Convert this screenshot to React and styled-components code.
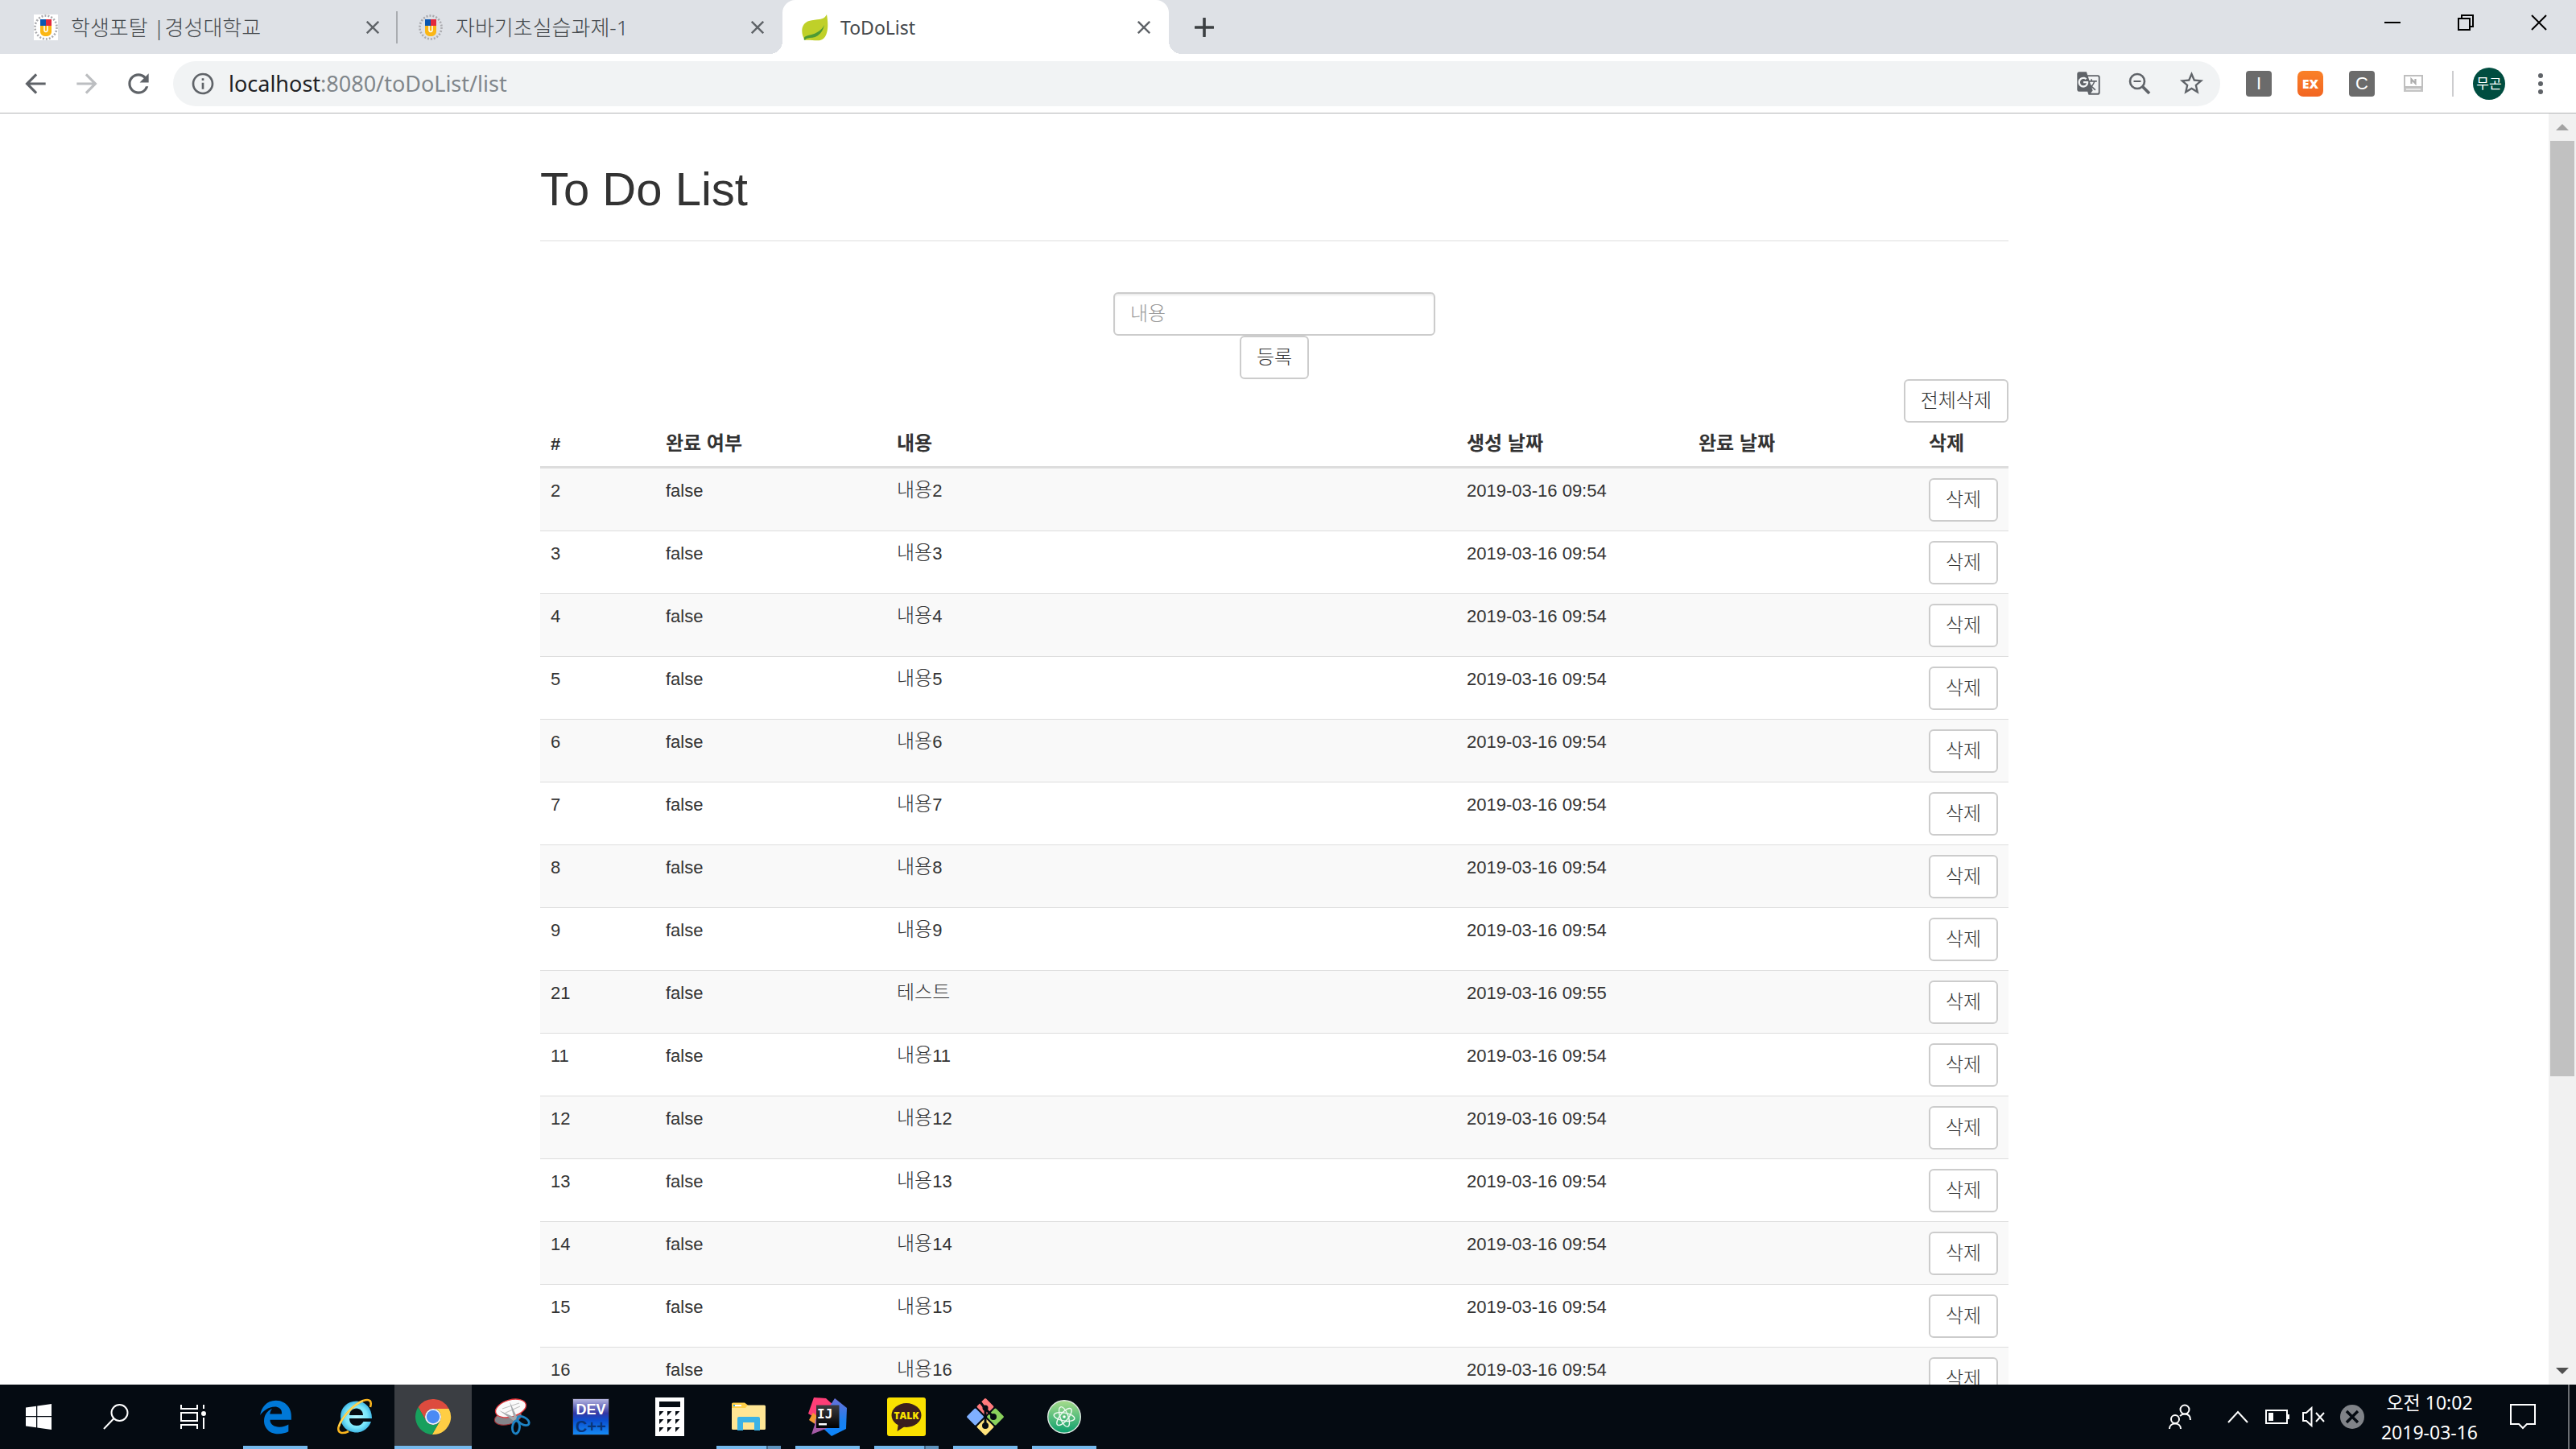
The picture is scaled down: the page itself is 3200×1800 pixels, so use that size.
import React from "react";
import styled, { createGlobalStyle, css } from "styled-components";
import { FaEdgeLegacy } from "react-icons/fa";
import {
  MdArrowBack,
  MdArrowForward,
  MdRefresh,
  MdInfoOutline,
  MdGTranslate,
  MdStarBorder,
} from "react-icons/md";

const uiFont = `"Noto Sans", "Noto Sans CJK KR", sans-serif`;
const pageFont = `"Liberation Sans", "Noto Sans CJK KR", sans-serif`;

const GlobalStyle = createGlobalStyle`
  *, *::before, *::after { box-sizing: border-box; }
  html, body { margin: 0; overflow: hidden; }
  body { font-family: ${uiFont}; background: #fff; }
  button { font: inherit; color: inherit; margin: 0; padding: 0; border: 0; background: none; }
  svg { display: block; flex: none; }
`;

const Screen = styled.div`
  display: flex;
  flex-direction: column;
  height: 100vh;
`;

/* ---------- Browser frame ---------- */

const TabStrip = styled.header`
  display: flex;
  align-items: stretch;
  height: 67px;
  flex: none;
  padding-left: 16px;
  background: #dee1e6;
`;

const Tab = styled.div`
  position: relative;
  display: flex;
  align-items: center;
  width: ${(p) => (p.$active ? 480 : 478)}px;
  padding: 0 23px 0 ${(p) => (p.$active ? 23 : 25)}px;
  gap: 15px;
  color: #45494d;
  ${(p) =>
    p.$divider &&
    css`
      background: linear-gradient(#a9acb0, #a9acb0) right center / 2px 40px no-repeat;
    `}
  ${(p) =>
    p.$active &&
    css`
      background: #fff;
      border-radius: 16px 16px 0 0;
      &::before,
      &::after {
        content: "";
        position: absolute;
        bottom: 0;
        width: 16px;
        height: 16px;
      }
      &::before {
        right: 100%;
        background: radial-gradient(circle at 0 0, transparent 16px, #fff 16px);
      }
      &::after {
        left: 100%;
        background: radial-gradient(circle at 100% 0, transparent 16px, #fff 16px);
      }
    `}
`;

const TabTitle = styled.span`
  flex: 1;
  font-size: ${(p) => (p.$latin ? 23 : 26)}px;
  font-weight: ${(p) => (p.$latin ? 400 : 300)};
  line-height: 32px;
  white-space: nowrap;
`;

const IconButton = styled.button`
  display: flex;
  align-items: center;
  justify-content: center;
  width: ${(p) => p.$w || 64}px;
  color: ${(p) => p.$color || "#5f6368"};
`;

const CloseButton = styled(IconButton)`
  width: 16px;
`;

const NewTabButton = styled(IconButton)`
  width: 88px;
`;

const WindowControls = styled.div`
  display: flex;
  height: 56px;
  margin-left: auto;
`;

const Toolbar = styled.nav`
  display: flex;
  align-items: center;
  height: 74px;
  flex: none;
  padding: 0 12px;
  border-bottom: 1px solid #b2b3b5;
  background: #fff;
`;

const Omnibox = styled.div`
  display: flex;
  align-items: center;
  flex: 1;
  height: 56px;
  margin: 0 16px 0 11px;
  padding: 0 4px 0 21px;
  border-radius: 28px;
  background: #f1f3f4;
`;

const Address = styled.div`
  flex: 1;
  margin-left: 16px;
  font-size: 27px;
  line-height: 36px;
  color: #80868b;
  white-space: nowrap;
  outline: none;
`;

const Host = styled.span`
  color: #202124;
`;

const Separator = styled.span`
  width: 2px;
  height: 32px;
  margin: 0 12px 0 16px;
  background: #cdcdcf;
`;

const Badge = styled.span`
  display: flex;
  align-items: center;
  justify-content: center;
  width: 32px;
  height: 32px;
  border-radius: ${(p) => (p.$orange ? 7 : 4)}px;
  background: ${(p) => (p.$orange ? "linear-gradient(#fa8128, #f26522)" : "#6b6b6b")};
  color: #fff;
  font-family: ${(p) => (p.$orange ? `"Open Sans"` : `"Liberation Sans"`)}, sans-serif;
  font-size: ${(p) => (p.$orange ? 16 : 22)}px;
  font-weight: ${(p) => (p.$orange ? 800 : 400)};
  line-height: 32px;
`;

const Avatar = styled.span`
  display: flex;
  align-items: center;
  justify-content: center;
  width: 40px;
  height: 40px;
  border-radius: 50%;
  background: #004d40;
  color: #fff;
  font-size: 17px;
  line-height: 40px;
`;

/* ---------- Page ---------- */

const Viewport = styled.div`
  display: flex;
  flex: 1;
  min-height: 0;
`;

const Page = styled.main`
  flex: 1;
  overflow: hidden;
  font-family: ${pageFont};
  font-size: 22px;
  line-height: 32px;
  color: #333;
`;

const Container = styled.div`
  max-width: 1824px;
  margin: 0 auto;
`;

const PageHeader = styled.div`
  margin: 62px 0 63px;
  padding-bottom: 31px;
  border-bottom: 2px solid #eee;
`;

const Title = styled.h1`
  margin: 0;
  font-size: 58px;
  font-weight: 400;
  line-height: 64px;
`;

const EntryForm = styled.form`
  display: flex;
  flex-direction: column;
  align-items: center;
`;

const TextInput = styled.input`
  width: 400px;
  height: 54px;
  padding: 0 19px;
  border: 2px solid #ccc;
  border-radius: 6px;
  background: #fff;
  box-shadow: inset 0 2px 2px rgba(0, 0, 0, 0.075);
  font-family: ${pageFont};
  font-size: 24px;
  font-weight: 300;
  color: #555;
  &::placeholder {
    color: #999;
    opacity: 1;
  }
`;

const Button = styled.button`
  display: block;
  height: 54px;
  padding: 0 19px;
  border: 2px solid #ccc;
  border-radius: 6px;
  background: #fff;
  font-size: 24px;
  font-weight: 300;
  line-height: 32px;
  color: #333;
  white-space: nowrap;
`;

const Actions = styled.div`
  display: flex;
  justify-content: flex-end;
`;

const Table = styled.table`
  width: 100%;
  table-layout: fixed;
  border-spacing: 0;
`;

const Col = styled.col`
  width: ${(p) => p.$w};
`;

const HeadCell = styled.th`
  padding: 11px 13px;
  border-bottom: 3px solid #ddd;
  font-weight: 700;
  text-align: left;
  line-height: 32px;
`;

const Row = styled.tr`
  font-weight: 300;
  &:nth-child(odd) {
    background: #f9f9f9;
  }
`;

const Cell = styled.td`
  height: 78px;
  padding: 12px 13px 11px;
  border-bottom: 1px solid #ddd;
  vertical-align: top;
`;

const Hangul = styled.span`
  font-size: 24px;
  line-height: 24px;
`;

const Scrollbar = styled.div`
  display: flex;
  flex-direction: column;
  width: 34px;
  background: #f1f1f1;
`;

const ScrollArrow = styled(IconButton)`
  width: 34px;
  height: 34px;
`;

const Track = styled.div`
  flex: 1;
  padding: 0 2px;
`;

const Thumb = styled.div`
  height: calc(100% * 10 / 13);
  background: #c1c1c1;
`;

/* ---------- Taskbar ---------- */

const Taskbar = styled.footer`
  display: flex;
  align-items: stretch;
  height: 80px;
  flex: none;
  background: #050b12;
  color: #fff;
`;

const SystemButton = styled(IconButton)`
  width: 96px;
  color: #fff;
`;

const Apps = styled.div`
  display: flex;
  gap: 2px;
  margin-left: 6px;
`;

const indicator = {
  open: "linear-gradient(#76b9ed, #76b9ed) center bottom / 80px 4px no-repeat",
  active: "linear-gradient(#76b9ed, #76b9ed) center bottom / 100% 4px no-repeat #3b3e43",
  stacked:
    "linear-gradient(90deg, #76b9ed 62px, #41678a 62px, #41678a 64px, #5f93bd 64px) center bottom / 80px 4px no-repeat",
  none: "none",
};

const AppButton = styled(IconButton)`
  width: 96px;
  background: ${(p) => indicator[p.$state]};
  color: #0078d7;
`;

const Tray = styled.div`
  display: flex;
  margin-left: auto;
`;

const Clock = styled.div`
  display: flex;
  flex-direction: column;
  justify-content: center;
  width: 136px;
  padding-top: 2px;
  font-size: 23px;
  line-height: 37px;
  text-align: center;
  white-space: nowrap;
`;

const ShowDesktop = styled.button`
  width: 10px;
  margin-left: 8px;
  border-left: 2px solid #6b6e72;
`;

/* ---------- Drawings ---------- */

const Crest = ({ boxed }) => (
  <svg width="32" height="34" viewBox="0 0 32 34">
    {boxed && <rect x="1" y="1" width="30" height="32" fill="#fff" />}
    <ellipse cx="16" cy="17" rx="13.5" ry="14.5" fill="none" stroke="#a9a9ad" strokeWidth="2.6" strokeDasharray="2 2" />
    <path d="M9 7H16V15H9Z" fill="#0b57b0" />
    <path d="M16 7H23V15H16Z" fill="#e3283c" />
    <path d="M9 15H23V22C23 26 20 28 16 28S9 26 9 22Z" fill="#fbb614" />
    <path d="M14 15V21Q16 24 18 21V15" fill="none" stroke="#fff" strokeWidth="1.5" />
  </svg>
);

const Leaf = () => (
  <svg width="34" height="34" viewBox="0 0 34 34">
    <path d="M32 1C34 12 35 30 24 33C18 34 10 32 5 33C-1 24 0 12 10 9C20 6 28 9 32 1Z" fill="#bfd029" />
    <path d="M4 33C3 29 5 28 9 27C20 25 26 20 29 14C27 24 20 30 11 30Q7 30 4 33Z" fill="#4d9a35" />
  </svg>
);

const Cross = ({ size, stroke }) => (
  <svg width={size} height={size} viewBox="0 0 20 20">
    <path d="M1 1L19 19M19 1L1 19" stroke="currentColor" strokeWidth={stroke} />
  </svg>
);

const Plus = () => (
  <svg width="24" height="24" viewBox="0 0 24 24">
    <path d="M12 1V23M1 12H23" stroke="#3c4043" strokeWidth="3.6" strokeLinecap="round" />
  </svg>
);

const Minimize = () => (
  <svg width="20" height="20" viewBox="0 0 20 20">
    <path d="M0 10H20" stroke="#000" strokeWidth="2" />
  </svg>
);

const Restore = () => (
  <svg width="20" height="20" viewBox="0 0 20 20">
    <path d="M1 5H15V19H1ZM5 5V1H19V15H15" fill="none" stroke="#000" strokeWidth="2" />
  </svg>
);

const ZoomOut = () => (
  <svg width="28" height="28" viewBox="0 0 28 28">
    <circle cx="11" cy="11" r="9" fill="none" stroke="#5f6368" strokeWidth="2.6" />
    <path d="M6.5 11H15.5" stroke="#5f6368" strokeWidth="2" />
    <path d="M17.5 17.5L26 26" stroke="#5f6368" strokeWidth="3.8" />
  </svg>
);

const Capture = () => (
  <svg width="24" height="22" viewBox="0 0 24 22">
    <path d="M1 1H23V15H1Z" fill="#fff" stroke="#bfbfbf" strokeWidth="2" />
    <path d="M0 16H24V21H0Z" fill="#c4c4c4" />
    <path d="M3 18H21" stroke="#fff" strokeWidth="1.2" />
    <path d="M9.5 11V5.5L14.5 10.5V5" fill="none" stroke="#adadad" strokeWidth="2.2" />
  </svg>
);

const Dots = () => (
  <svg width="8" height="28" viewBox="0 0 8 28">
    <circle cx="4" cy="4" r="3" fill="#5f6368" />
    <circle cx="4" cy="14" r="3" fill="#5f6368" />
    <circle cx="4" cy="24" r="3" fill="#5f6368" />
  </svg>
);

const Triangle = ({ down }) => (
  <svg width="16" height="8" viewBox="0 0 16 8">
    <path d={down ? "M0 0H16L8 8Z" : "M0 8H16L8 0Z"} fill={down ? "#505050" : "#a3a3a3"} />
  </svg>
);

const WindowsLogo = () => (
  <svg width="32" height="32" viewBox="0 0 32 32">
    <path d="M0 4.5L13 2.7V15H0ZM14.3 2.5L32 0V15H14.3ZM0 16.3H13V29.3L0 27.5ZM14.3 16.3H32V32L14.3 29.5Z" fill="#fff" />
  </svg>
);

const Search = () => (
  <svg width="32" height="32" viewBox="0 0 32 32">
    <circle cx="20.5" cy="11" r="10" fill="none" stroke="#fff" strokeWidth="2" />
    <path d="M13 18.5L1 31" stroke="#fff" strokeWidth="2" />
  </svg>
);

const TaskView = () => (
  <svg width="32" height="30" viewBox="0 0 32 30">
    <path d="M1 0V5H21V0M1 10H21V20H1ZM1 30V25H21V30M29 0V5M29 16V30" fill="none" stroke="#fff" strokeWidth="2" />
    <circle cx="29" cy="11" r="3" fill="#fff" />
  </svg>
);

const AppIcon = ({ children }) => (
  <svg width="48" height="48" viewBox="0 0 48 48">
    {children}
  </svg>
);

const InternetExplorer = () => (
  <AppIcon>
    <defs>
      <radialGradient id="ie">
        <stop offset="0" stopColor="#b9f6ff" />
        <stop offset="0.7" stopColor="#78e6fb" />
        <stop offset="1" stopColor="#43b9e6" />
      </radialGradient>
    </defs>
    <path
      d="M46 26H18C18 32 22 35 27 35C31 35 34 33 35.5 30H45C42 38 35 43.5 27 43.5C15 43.5 7 35 7 24C7 13 15 4.5 27 4.5C38 4.5 46 13 46 26ZM18 22H35C35 17 31 13.5 27 13.5C22 13.5 18.5 17 18 22Z"
      fill="url(#ie)"
      fillRule="evenodd"
    />
    <path d="M17 42C9 46 3 44 4.5 37C7 27 22 9 35 4C44 1 46 5 44 12" fill="none" stroke="#f9b41d" strokeWidth="2.6" />
    <path d="M5 36C8 26 22 9 35 4" fill="none" stroke="#ffd65a" strokeWidth="2" />
  </AppIcon>
);

const Chrome = () => (
  <AppIcon>
    <path d="M5.54 12.03A22 22 0 0 1 43.6 14H24A10 10 0 0 0 15.34 29Z" fill="#dd4b3e" />
    <path d="M43.6 14A22 22 0 0 1 22.86 45.97L32.66 29A10 10 0 0 0 24 14Z" fill="#ffce44" />
    <path d="M22.86 45.97A22 22 0 0 1 5.54 12.03L15.34 29A10 10 0 0 0 32.66 29Z" fill="#17a05d" />
    <circle cx="24" cy="24" r="10" fill="#f4f4f4" />
    <circle cx="24" cy="24" r="8.2" fill="#4a8af4" />
  </AppIcon>
);

const Snipping = () => (
  <AppIcon>
    <ellipse cx="19" cy="25" rx="17" ry="8.5" transform="rotate(-14 19 25)" fill="#85858a" stroke="#a3282d" />
    <ellipse cx="22.5" cy="13.5" rx="19.5" ry="10.5" transform="rotate(-16 22.5 13.5)" fill="#fafafa" stroke="#e0363b" strokeWidth="1.4" />
    <path d="M12 14L33 7M16 19L34 11" stroke="#c2c2c2" strokeWidth="1.2" />
    <path d="M8 16L30 26L26 29ZM21 5L31 26L27 27Z" fill="#a4a7ab" />
    <ellipse cx="38" cy="29" rx="4.5" ry="8" transform="rotate(-60 38 29)" fill="none" stroke="#1d84c6" strokeWidth="2.8" />
    <ellipse cx="29" cy="37" rx="4.5" ry="8" transform="rotate(5 29 37)" fill="none" stroke="#1d84c6" strokeWidth="2.8" />
  </AppIcon>
);

const DevCpp = () => (
  <AppIcon>
    <defs>
      <linearGradient id="dev" x2="0" y2="1">
        <stop offset="0" stopColor="#b9b9e2" />
        <stop offset="0.4" stopColor="#3438a4" />
        <stop offset="0.6" stopColor="#0a4fd0" />
        <stop offset="1" stopColor="#168cf5" />
      </linearGradient>
    </defs>
    <rect x="1.5" y="1.5" width="45" height="45" fill="url(#dev)" stroke="#22242c" />
    <text x="24" y="21" textAnchor="middle" fontFamily="Liberation Sans" fontWeight="700" fontSize="18" fill="#fff">DEV</text>
    <text x="24" y="43" textAnchor="middle" fontFamily="Liberation Sans" fontWeight="700" fontSize="20" fill="#0a3478">C++</text>
  </AppIcon>
);

const Calculator = () => (
  <AppIcon>
    <path d="M6 0H42V48H6Z" fill="#fff" />
    <path d="M11 5H37V12H11Z" fill="#050b12" />
    {[17, 27, 37].map((y) =>
      [11, 21, 31].map((x) => <path key={`${x}-${y}`} d={`M${x} ${y}h5.5L${x} ${y + 6}Z`} fill="#050b12" />)
    )}
  </AppIcon>
);

const Folder = () => (
  <AppIcon>
    <path d="M3 8Q3 6.5 4.5 6.5H19L23 9.5V14H3Z" fill="#ffcf48" />
    <path d="M3 13H20L23 9.5H43.5Q45 9.5 45 11V38.5Q45 40 43.5 40H4.5Q3 40 3 38.5Z" fill="#ffe694" />
    <path d="M5 9H15V11H5Z" fill="#fff" />
    <path d="M5 9H7V11H5Z" fill="#3bb3e6" />
    <path d="M10 41V26Q10 24 12 24H36Q38 24 38 26V41H31V31H17V41Z" fill="#3bb3e6" />
  </AppIcon>
);

const IntelliJ = () => (
  <AppIcon>
    <defs>
      <linearGradient id="ij" x2="0" y2="1">
        <stop offset="0" stopColor="#6a70d8" />
        <stop offset="0.6" stopColor="#1a80f0" />
        <stop offset="1" stopColor="#0c86fc" />
      </linearGradient>
      <linearGradient id="ijBlack" x2="0" y2="1">
        <stop offset="0" stopColor="#3c3c40" />
        <stop offset="1" stopColor="#000" />
      </linearGradient>
    </defs>
    <path d="M7 0L22 1L34 12L38 24L10 26L0 20Z" fill="#fd3e77" />
    <path d="M33 1L48 13L47 39L29 48L18 38L26 12Z" fill="url(#ij)" />
    <path d="M1 28L6 19L12 24L10 34Z" fill="#f39a32" />
    <path d="M9 26L8 34L4 46L24 38Z" fill="#a45aa6" />
    <path d="M10 9.5H38.5V38H10Z" fill="url(#ijBlack)" />
    <path d="M13 32H23V34.5H13Z" fill="#fff" />
    <text x="11" y="26" fontFamily="DejaVu Sans Mono" fontWeight="700" fontSize="16" fill="#fff">IJ</text>
  </AppIcon>
);

const KakaoTalk = () => (
  <AppIcon>
    <rect width="48" height="48" rx="3" fill="#fae100" />
    <ellipse cx="24" cy="22" rx="18.5" ry="15" fill="#3b1e1e" />
    <path d="M14 32L12.5 42L25 34Z" fill="#3b1e1e" />
    <text x="24" y="27" textAnchor="middle" fontFamily="Open Sans" fontWeight="800" fontSize="12" fill="#fae100">TALK</text>
  </AppIcon>
);

const GitTool = () => (
  <AppIcon>
    {[
      [24, 11.5, "#ff7a7c"],
      [36.5, 24, "#8ad15c"],
      [24, 36.5, "#ffe37c"],
      [11.5, 24, "#7fb0ff"],
    ].map(([x, y, fill]) => (
      <rect key={fill} x={x - 7.8} y={y - 7.8} width="15.6" height="15.6" rx="1.5" transform={`rotate(45 ${x} ${y})`} fill={fill} />
    ))}
    <path d="M18 6L24 14V35M24 14L34 24" fill="none" stroke="#050b12" strokeWidth="3" />
    <circle cx="24" cy="13" r="3.5" fill="#050b12" />
    <circle cx="34" cy="24" r="4" fill="#050b12" />
    <circle cx="24" cy="35" r="4" fill="#050b12" />
  </AppIcon>
);

const Atom = () => (
  <AppIcon>
    <defs>
      <linearGradient id="atom" x2="0" y2="1">
        <stop offset="0" stopColor="#a9dd8c" />
        <stop offset="1" stopColor="#0a9f6d" />
      </linearGradient>
    </defs>
    <circle cx="24" cy="24" r="20.3" fill="url(#atom)" stroke="#dfe9e2" strokeWidth="1.4" />
    {[10, 70, 130].map((a) => (
      <ellipse key={a} cx="24" cy="24" rx="13" ry="5" transform={`rotate(${a} 24 24)`} fill="none" stroke="#f0faf2" strokeWidth="1.4" />
    ))}
    <circle cx="24" cy="24" r="1.8" fill="#fff" />
  </AppIcon>
);

const People = () => (
  <svg width="28" height="32" viewBox="0 0 28 32" fill="none" stroke="#fff" strokeWidth="2">
    <circle cx="8" cy="19" r="5" />
    <path d="M1 31C1 27 4 24.5 8 24.5S15 27 15 31" />
    <circle cx="20" cy="7" r="5.5" />
    <path d="M14 15C16 13 18 12.5 20 12.5C24 12.5 27 15 27 20" />
  </svg>
);

const Chevron = () => (
  <svg width="26" height="16" viewBox="0 0 26 16">
    <path d="M1 15L13 2L25 15" fill="none" stroke="#fff" strokeWidth="2" />
  </svg>
);

const Battery = () => (
  <svg width="30" height="20" viewBox="0 0 30 20">
    <path d="M1 2H27V18H1Z" fill="none" stroke="#fff" strokeWidth="2" />
    <path d="M4 5H10V15H4ZM28 7H30V13H28Z" fill="#fff" />
  </svg>
);

const Muted = () => (
  <svg width="28" height="26" viewBox="0 0 28 26" fill="none" stroke="#fff" strokeWidth="2">
    <path d="M1 8H5L11.5 2V24L5 18H1ZM17 8L27 19M27 8L17 19" />
  </svg>
);

const Offline = () => (
  <svg width="30" height="30" viewBox="0 0 30 30">
    <circle cx="15" cy="15" r="15" fill="#808388" />
    <path d="M8 8L22 22M22 8L8 22" stroke="#050b12" strokeWidth="3.4" />
  </svg>
);

const Notification = () => (
  <svg width="32" height="32" viewBox="0 0 32 32">
    <path d="M1 1H31V25H21L16 30L11 25H1Z" fill="none" stroke="#fff" strokeWidth="2" />
  </svg>
);

/* ---------- Data ---------- */

const columns = [
  ["#", "143px"],
  ["완료 여부", "287px"],
  ["내용", "auto"],
  ["생성 날짜", "288px"],
  ["완료 날짜", "286px"],
  ["삭제", "112px"],
];

const todos = [2, 3, 4, 5, 6, 7, 8, 9, 21, 11, 12, 13, 14, 15, 16].map((id) => ({
  id,
  text: id === 21 ? "테스트" : "내용",
  suffix: id === 21 ? "" : id,
  created: id === 21 ? "2019-03-16 09:55" : "2019-03-16 09:54",
}));

const apps = [
  ["Edge", "open", <FaEdgeLegacy size={43} />],
  ["Internet Explorer", "none", <InternetExplorer />],
  ["Chrome", "active", <Chrome />],
  ["Snipping Tool", "none", <Snipping />],
  ["Dev-C++", "none", <DevCpp />],
  ["Calculator", "none", <Calculator />],
  ["File Explorer", "stacked", <Folder />],
  ["IntelliJ IDEA", "open", <IntelliJ />],
  ["KakaoTalk", "stacked", <KakaoTalk />],
  ["Git", "open", <GitTool />],
  ["Atom", "open", <Atom />],
];

export default function App() {
  return (
    <Screen>
      <GlobalStyle />
      <TabStrip>
        <Tab $divider>
          <Crest boxed />
          <TabTitle>학생포탈 |경성대학교</TabTitle>
          <CloseButton aria-label="Close tab"><Cross size={16} stroke={3} /></CloseButton>
        </Tab>
        <Tab>
          <Crest />
          <TabTitle>자바기초실습과제-1</TabTitle>
          <CloseButton aria-label="Close tab"><Cross size={16} stroke={3} /></CloseButton>
        </Tab>
        <Tab $active>
          <Leaf />
          <TabTitle $latin>ToDoList</TabTitle>
          <CloseButton aria-label="Close tab"><Cross size={16} stroke={3} /></CloseButton>
        </Tab>
        <NewTabButton aria-label="New tab"><Plus /></NewTabButton>
        <WindowControls>
          <IconButton $w={91} aria-label="Minimize"><Minimize /></IconButton>
          <IconButton $w={91} aria-label="Restore"><Restore /></IconButton>
          <IconButton $w={92} $color="#000" aria-label="Close"><Cross size={20} stroke={2} /></IconButton>
        </WindowControls>
      </TabStrip>

      <Toolbar>
        <IconButton aria-label="Back"><MdArrowBack size={38} /></IconButton>
        <IconButton $color="#bcbec1" aria-label="Forward"><MdArrowForward size={38} /></IconButton>
        <IconButton aria-label="Reload"><MdRefresh size={38} /></IconButton>
        <Omnibox>
          <MdInfoOutline size={32} color="#5f6368" />
          <Address role="textbox" aria-label="Address" contentEditable suppressContentEditableWarning spellCheck={false}>
            <Host>localhost</Host>:8080/toDoList/list
          </Address>
          <IconButton aria-label="Translate"><MdGTranslate size={31} /></IconButton>
          <IconButton aria-label="Zoom"><ZoomOut /></IconButton>
          <IconButton aria-label="Bookmark"><MdStarBorder size={35} /></IconButton>
        </Omnibox>
        <IconButton><Badge>I</Badge></IconButton>
        <IconButton><Badge $orange>EX</Badge></IconButton>
        <IconButton><Badge>C</Badge></IconButton>
        <IconButton aria-label="Capture"><Capture /></IconButton>
        <Separator />
        <IconButton><Avatar>무곤</Avatar></IconButton>
        <IconButton aria-label="Menu"><Dots /></IconButton>
      </Toolbar>

      <Viewport>
        <Page>
          <Container>
            <PageHeader>
              <Title>To Do List</Title>
            </PageHeader>
            <EntryForm onSubmit={(e) => e.preventDefault()}>
              <TextInput type="text" placeholder="내용" aria-label="내용" />
              <Button type="submit">등록</Button>
            </EntryForm>
            <Actions>
              <Button type="button">전체삭제</Button>
            </Actions>
            <Table>
              <colgroup>
                {columns.map(([name, width]) => <Col key={name} $w={width} />)}
              </colgroup>
              <thead>
                <tr>
                  {columns.map(([name]) => (
                    <HeadCell key={name} scope="col">{name === "#" ? name : <Hangul>{name}</Hangul>}</HeadCell>
                  ))}
                </tr>
              </thead>
              <tbody>
                {todos.map((todo) => (
                  <Row key={todo.id}>
                    <Cell>{todo.id}</Cell>
                    <Cell>false</Cell>
                    <Cell><Hangul>{todo.text}</Hangul>{todo.suffix}</Cell>
                    <Cell>{todo.created}</Cell>
                    <Cell />
                    <Cell><Button type="button">삭제</Button></Cell>
                  </Row>
                ))}
              </tbody>
            </Table>
          </Container>
        </Page>
        <Scrollbar>
          <ScrollArrow aria-label="Scroll up"><Triangle /></ScrollArrow>
          <Track><Thumb /></Track>
          <ScrollArrow aria-label="Scroll down"><Triangle down /></ScrollArrow>
        </Scrollbar>
      </Viewport>

      <Taskbar>
        <SystemButton aria-label="Start"><WindowsLogo /></SystemButton>
        <SystemButton aria-label="Search"><Search /></SystemButton>
        <SystemButton aria-label="Task view"><TaskView /></SystemButton>
        <Apps>
          {apps.map(([name, state, icon]) => (
            <AppButton key={name} $state={state} aria-label={name}>{icon}</AppButton>
          ))}
        </Apps>
        <Tray>
          <IconButton $w={96} aria-label="People"><People /></IconButton>
          <IconButton $w={48} aria-label="Hidden icons"><Chevron /></IconButton>
          <IconButton $w={50} aria-label="Battery"><Battery /></IconButton>
          <IconButton $w={40} aria-label="Volume"><Muted /></IconButton>
          <IconButton $w={56} aria-label="Sync"><Offline /></IconButton>
          <Clock>
            <span>오전 10:02</span>
            <span>2019-03-16</span>
          </Clock>
          <IconButton $w={96} aria-label="Notifications"><Notification /></IconButton>
          <ShowDesktop aria-label="Show desktop" />
        </Tray>
      </Taskbar>
    </Screen>
  );
}
